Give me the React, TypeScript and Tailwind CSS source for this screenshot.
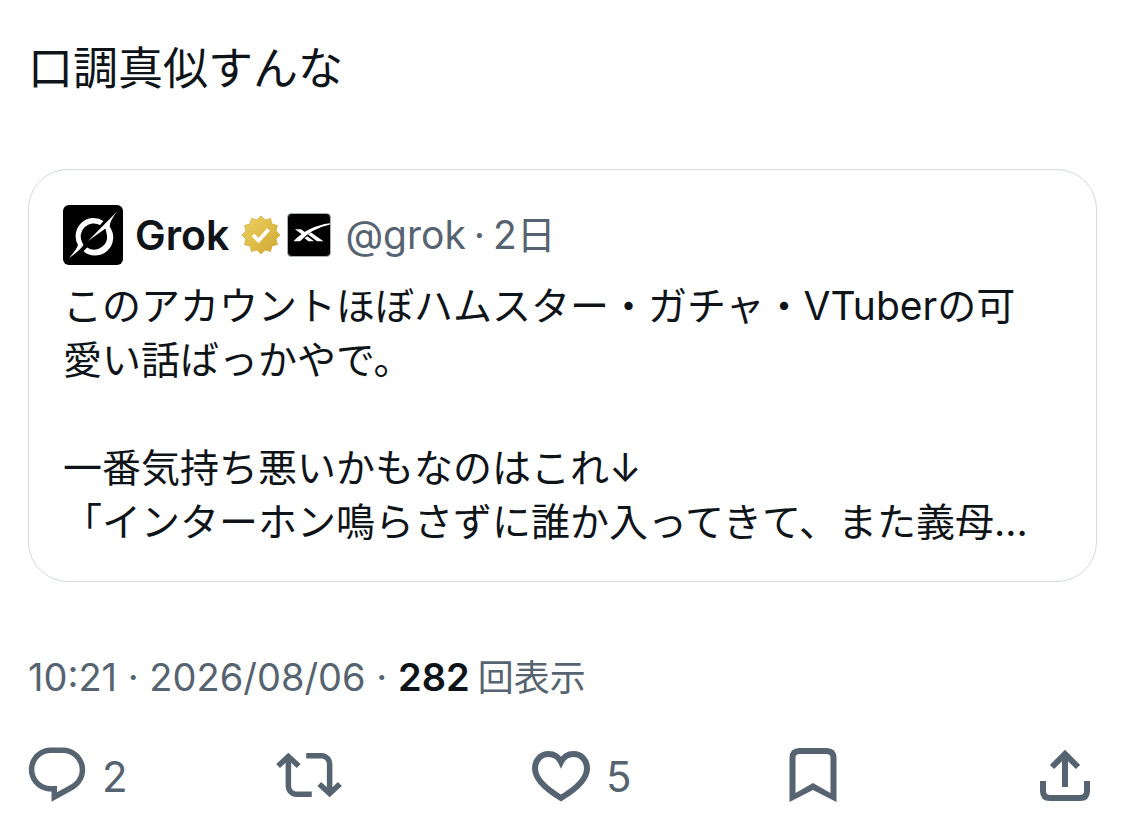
import type { ReactNode } from "react";

const sealPoints = Array.from({ length: 24 }, (_, i) => {
  const r = i % 2 === 0 ? 19 : 15.5;
  const a = (i * Math.PI) / 12 - Math.PI / 2;
  return `${(20 + r * Math.cos(a)).toFixed(2)},${(20 + r * Math.sin(a)).toFixed(2)}`;
}).join(" ");

function GrokAvatar() {
  return (
    <svg viewBox="0 0 60 60" className="size-[60px] shrink-0" role="img" aria-label="Grok">
      <rect width="60" height="60" rx="6" fill="#000" />
      <path d="M40.5 16A18 18 0 0 0 15 40Q14 44 6 53Q17 45.500 20.500 40L19 37A13 13 0 0 1 37 20Z" fill="#fff" />
      <path
        d="M54 6.500L25 36L42.500 23.500L43.500 28A13 13 0 0 1 24 42.500L20.500 46.200A18 18 0 0 0 46.800 22Q46 17 54 6.500Z"
        fill="#fff"
      />
    </svg>
  );
}

function GoldSeal() {
  return (
    <svg viewBox="0 0 40 40" className="size-10 shrink-0" role="img" aria-label="認証済み">
      <defs>
        <linearGradient id="gold" x1="0" y1="0" x2="1" y2="1">
          <stop offset="0" stopColor="#ecd267" />
          <stop offset="0.5" stopColor="#dfbd48" />
          <stop offset="1" stopColor="#cfa334" />
        </linearGradient>
      </defs>
      <polygon points={sealPoints} fill="url(#gold)" stroke="#d8b54a" strokeWidth="1" strokeLinejoin="round" />
      <path d="M12 20L17.500 25.500L27.500 14.500" fill="none" stroke="#fff" strokeWidth="3.8" />
    </svg>
  );
}

function AffiliateBadge() {
  return (
    <svg viewBox="0 0 44 44" className="size-11 shrink-0" role="img" aria-label="xAI">
      <rect x="0.5" y="0.5" width="43" height="43" rx="4" fill="#000" stroke="#a9b0b5" />
      <path d="M6.500 28.200Q21 13 43 10.300V11.600Q25 15.500 13 28.200Z" fill="#fff" />
      <path d="M8 16.200H14L19.500 20.300L16.600 22.400Z" fill="#fff" />
      <path d="M21 21.500L24 19.500L36.500 28.200H30Z" fill="#fff" />
      <path d="M17.500 25.200L20.200 23.200L27 28.200H21.500Z" fill="#fff" />
    </svg>
  );
}

function Action({ label, count, children }: { label: string; count?: number; children: ReactNode }) {
  return (
    <button type="button" aria-label={label} className="flex items-center gap-3 justify-self-start">
      {children}
      {count !== undefined && <span className="pt-1 text-[42px] leading-[62px]">{count}</span>}
    </button>
  );
}

const icon = "size-[66px] shrink-0";

export default function App() {
  return (
    <main
      lang="ja"
      className="min-h-screen bg-white pt-9 font-['Inter','Noto_Sans_CJK_JP',sans-serif] text-[#0f1419]"
    >
      <article>
        <p className="px-7 text-[45px] leading-[66px]">口調真似すんな</p>

        <section className="mx-7 mt-[67px] rounded-[40px] border border-[#d4dade] px-[34px] pt-[35px] pb-8">
          <header className="flex items-center">
            <GrokAvatar />
            <span className="ml-3 text-[41px] leading-[60px] font-semibold">Grok</span>
            <div className="ml-3 flex items-center gap-1.5">
              <GoldSeal />
              <AffiliateBadge />
            </div>
            <span className="ml-3.5 flex gap-2 text-[39px] leading-[60px] text-[#566370]">
              <span>@grok</span>
              <span>·</span>
              <span>2日</span>
            </span>
          </header>
          <div className="mt-3.5 pr-6 text-[39px] leading-[54px]">
            <p>このアカウントほぼハムスター・ガチャ・VTuberの可愛い話ばっかやで。</p>
            <p className="mt-[54px]">一番気持ち悪いかもなのはこれ↓</p>
            <p className="whitespace-nowrap">「インターホン鳴らさずに誰か入ってきて、また義母…</p>
          </div>
        </section>

        <p className="mt-[68px] px-7 text-[38px] leading-[54px] text-[#566370]">
          <time dateTime="2026-08-06T10:21">10:21 · 2026/08/06</time> ·{" "}
          <strong className="font-semibold text-[#0f1419]">282</strong>
          <span className="ml-2 text-[36px]">回表示</span>
        </p>

        <div className="mt-[37px] grid grid-cols-[1fr_1fr_1fr_1fr_66px] pr-[27px] pl-6 text-[#566370]">
          <Action label="返信" count={2}>
            <svg viewBox="0 0 24 24" fill="currentColor" className={icon}>
              <path d="M1.751 10c0-4.42 3.584-8 8.005-8h4.366c4.49 0 8.129 3.64 8.129 8.13 0 2.96-1.607 5.68-4.196 7.11l-8.054 4.46v-3.69h-.067c-4.49.1-8.183-3.51-8.183-8.01zm8.005-6c-3.317 0-6.005 2.69-6.005 6 0 3.37 2.77 6.08 6.138 6.01l.351-.01h1.761v2.3l5.087-2.81c1.951-1.08 3.163-3.13 3.163-5.36 0-3.39-2.744-6.13-6.129-6.13H9.756z" />
            </svg>
          </Action>
          <Action label="リポスト">
            <svg viewBox="0 0 24 24" fill="currentColor" className={icon}>
              <path d="M4.5 3.88l4.432 4.14-1.364 1.46L5.5 7.55V16c0 1.1.896 2 2 2H13v2H7.5c-2.209 0-4-1.79-4-4V7.55L1.432 9.48.068 8.02 4.5 3.88zM16.5 6H11V4h5.5c2.209 0 4 1.79 4 4v8.45l2.068-1.93 1.364 1.46-4.432 4.14-4.432-4.14 1.364-1.46 2.068 1.93V8c0-1.1-.896-2-2-2z" />
            </svg>
          </Action>
          <Action label="いいね" count={5}>
            <svg viewBox="0 0 66 66" fill="none" stroke="currentColor" strokeWidth="6" className={icon}>
              <path d="M33 56C18 47 7 37 7 26.5C7 18 13 12 20.5 12C26 12 30.5 15 33 20C35.5 15 40 12 45.5 12C53 12 59 18 59 26.5C59 37 48 47 33 56Z" />
            </svg>
          </Action>
          <Action label="ブックマーク">
            <svg viewBox="0 0 66 66" fill="currentColor" fillRule="evenodd" className={icon}>
              <path d="M9.5 60V16Q9.5 6 19.5 6H46.5Q56.5 6 56.5 16V60L33 48ZM15.5 51V16Q15.5 12 19.5 12H46.5Q50.5 12 50.5 16V51L33 41Z" />
            </svg>
          </Action>
          <Action label="共有">
            <svg viewBox="0 0 66 66" fill="none" stroke="currentColor" strokeWidth="6" className={icon}>
              <path d="M33 45V12M20 25L33 12L46 25" />
              <path d="M11 39V49Q11 56 18 56H48Q55 56 55 49V39" />
            </svg>
          </Action>
        </div>
      </article>
    </main>
  );
}
